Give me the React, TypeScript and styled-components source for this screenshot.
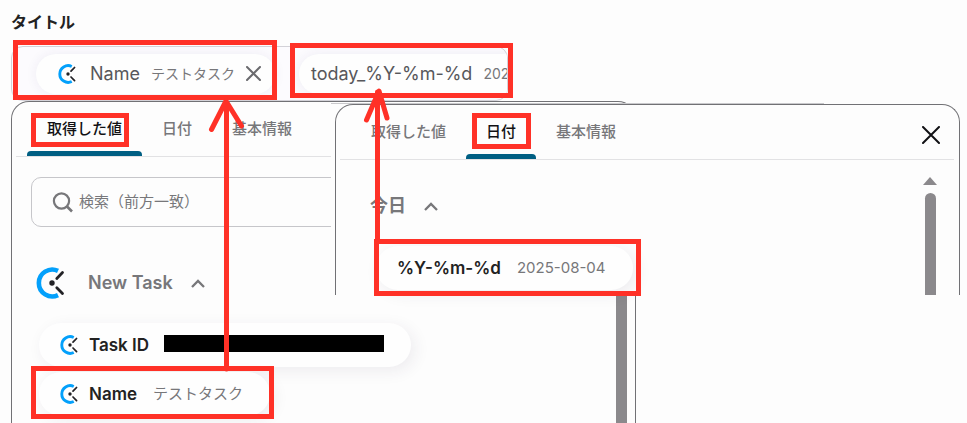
import React from "react";
import styled, { createGlobalStyle, css } from "styled-components";

const GlobalStyle = createGlobalStyle`
  *, *::before, *::after { box-sizing: border-box; }
  body {
    margin: 0;
    background: #fdfdfd;
    color: #222;
    font-family: Inter, "Noto Sans CJK JP", sans-serif;
  }
  button, input { font: inherit; color: inherit; border: 0; background: none; padding: 0; }
`;

const Page = styled.main`
  position: relative;
  display: flex;
  flex-direction: column;
  min-height: 100vh;
  padding: 10px 0 0 11px;
  overflow: hidden;
`;

const FieldLabel = styled.h1`
  margin: 0 0 12px;
  font-size: 16px;
  line-height: 24px;
  font-weight: 600;
`;

const Field = styled.div`
  display: flex;
  align-items: center;
  gap: 24px;
  width: 52%;
  max-width: 499px;
  height: 55px;
  padding-left: 24px;
  border: 1px solid #d3d2d8;
  border-radius: 12px;
  background: #fcfbfe;
  overflow: hidden;
`;

const Token = styled.div`
  display: flex;
  flex: none;
  align-items: center;
  height: 40px;
  padding: 0 11px 0 22px;
  border-radius: 20px;
  background: #fefefe;
  box-shadow: 0 0 12px rgba(60, 40, 110, 0.07);
  color: #57575b;
  white-space: nowrap;
`;

const TextToken = styled(Token)`
  padding-left: 12px;
`;

const TokenName = styled.span<{ $afterIcon?: boolean }>`
  margin: 0 11px 0 ${(p) => (p.$afterIcon ? "12px" : "0")};
  font-size: 18px;
  line-height: 24px;
`;

const TokenValue = styled.span`
  color: #77777a;
  font-size: 14px;
  line-height: 24px;
`;

const IconButton = styled.button`
  display: grid;
  place-items: center;
  cursor: pointer;
`;

const RemoveButton = styled(IconButton)`
  margin-left: 9px;
  width: 20px;
  height: 20px;
  color: #6a6a6e;
`;

const Panels = styled.div`
  display: grid;
  flex: 1;
  grid-template-columns: 320px 305px 1fr;
  grid-template-rows: 1fr;
`;

const panelFrame = css`
  border: 1px solid #717175;
  border-bottom: 0;
  border-radius: 18px 18px 0 0;
  background: #fdfdfd;
`;

const ValuesPanel = styled.section`
  ${panelFrame}
  grid-column: 1 / 3;
  grid-row: 1;
  min-width: 0;
`;

const DateLayer = styled.div`
  grid-column: 2 / 4;
  grid-row: 1;
  align-self: start;
  z-index: 1;
  margin-top: 2px;
  padding: 0 7px 0 4px;
  background: linear-gradient(#c9c9cc, #c9c9cc) 0 0 / 493px 1px no-repeat #fdfdfd;
`;

const DatePanel = styled.section`
  ${panelFrame}
  margin-top: 1px;
  height: 191px;
`;

const TabBar = styled.div`
  display: flex;
  align-items: stretch;
  height: 55px;
  margin: 0 5px 0 4px;
  padding-left: 11px;
  border-bottom: 1px solid #e2e2e4;
`;

const Tab = styled.button`
  display: flex;
  flex-direction: column;
  padding: 15px 0 0;
  color: #77777a;
  font-size: 15px;
  line-height: 24px;
  font-weight: 500;
  white-space: nowrap;
  cursor: pointer;

  span { padding: 0 20px; }

  &::after {
    content: "";
    width: 100%;
    height: 5px;
    margin-top: auto;
    border-radius: 4px 4px 0 0;
  }

  &[aria-selected="true"] { color: #111114; }
  &[aria-selected="true"]::after { background: #005f83; }
`;

const CloseButton = styled(IconButton)`
  align-self: center;
  width: 24px;
  height: 24px;
  margin: 5px 11px 0 auto;
  color: #111114;
`;

const PanelBody = styled.div`
  display: flex;
`;

const ValuesBody = styled(PanelBody)`
  height: calc(100% - 55px);
`;

const ValuesContent = styled.div`
  flex: 1;
  min-width: 0;
  padding: 20px 16px 4px 19px;
`;

const DateContent = styled.div`
  flex: 1;
  padding: 33px 0 0 34px;
`;

const SearchBox = styled.label`
  display: flex;
  align-items: center;
  gap: 6px;
  height: 50px;
  padding-left: 20px;
  border: 1px solid #c6c6ca;
  border-radius: 10px;
`;

const SearchInput = styled.input`
  flex: 1;
  min-width: 0;
  outline: 0;
  font-size: 15px;
  line-height: 24px;

  &::placeholder { color: #77777a; opacity: 1; }
`;

const GroupHeader = styled.button`
  display: flex;
  align-items: center;
  color: #77777a;
  font-size: 18px;
  line-height: 26px;
  font-weight: 600;
  cursor: pointer;

  svg:last-child { margin-left: 17px; }
`;

const TaskHeader = styled(GroupHeader)`
  height: 32px;
  margin: 40px 0 24px 5px;

  span { margin-left: 20px; }
`;

const OptionList = styled.div`
  display: flex;
  flex-direction: column;
  align-items: flex-start;
  gap: 5px;
  padding-left: 8px;
`;

const Option = styled.button`
  display: flex;
  align-items: center;
  height: 44px;
  padding: 0 27px 0 21px;
  border-radius: 22px;
  background: #fefefe;
  box-shadow: 4px 4px 16px rgba(50, 40, 80, 0.08);
  white-space: nowrap;
  cursor: pointer;
`;

const DateOption = styled(Option)`
  margin: 27px 0 0 6px;
`;

const OptionName = styled.span<{ $afterIcon?: boolean }>`
  margin-left: ${(p) => (p.$afterIcon ? "9px" : "0")};
  font-size: 17px;
  line-height: 24px;
  font-weight: 600;
`;

const OptionValue = styled.span`
  margin-left: 16px;
  color: #77777a;
  font-size: 15px;
  line-height: 24px;
`;

const Redacted = styled.span`
  width: 220px;
  height: 17px;
  margin: 0 0 3px 15px;
  background: #000;
`;

const ValuesThumb = styled.div`
  width: 11px;
  margin-right: 8px;
  background: #8b898c;
`;

const Scrollbar = styled.div`
  display: flex;
  flex-direction: column;
  align-items: center;
  gap: 8px;
  width: 14px;
  height: 135px;
  margin-right: 22px;
  padding-top: 17px;
`;

const DateThumb = styled.div`
  flex: 1;
  width: 11px;
  border-radius: 6px 6px 0 0;
  background: #8b898c;
`;

const Markup = styled.svg`
  position: absolute;
  top: 0;
  left: 0;
  z-index: 2;
  pointer-events: none;
`;

const ClockLogo = ({ size }: { size: number }) => (
  <svg width={size} height={size} viewBox="0 0 32 32" fill="none" aria-hidden="true">
    <path d="M22 3.9A13.4 13.4 0 1 0 22 28.1" stroke="#03a0fb" strokeWidth="4.6" />
    <circle cx="16" cy="16" r="2.7" fill="#222226" />
    <path d="M20.8 11.4l5.7-5.8M20.8 20.8l5.7 5.8" stroke="#222226" strokeWidth="2.8" strokeLinecap="round" />
  </svg>
);

const Cross = ({ size, width }: { size: number; width: number }) => (
  <svg width={size} height={size} viewBox={`0 0 ${size} ${size}`} fill="none" stroke="currentColor" strokeWidth={width} strokeLinecap="round" aria-hidden="true">
    <path d={`M1 1L${size - 1} ${size - 1}M${size - 1} 1L1 ${size - 1}`} />
  </svg>
);

const Chevron = () => (
  <svg width="16" height="10" viewBox="0 0 16 10" fill="none" stroke="currentColor" strokeWidth="2.3" aria-hidden="true">
    <path d="M2 9L8 3L14 9" />
  </svg>
);

const SearchIcon = () => (
  <svg width="21" height="21" viewBox="0 0 21 21" fill="none" stroke="#77777a" strokeWidth="2.2" aria-hidden="true">
    <circle cx="9.5" cy="9" r="7.6" />
    <path d="M15 14.5L20 19.5" strokeWidth="2.6" />
  </svg>
);

const TABS = ["取得した値", "日付", "基本情報"];

const Tabs = ({ selected, children }: { selected: string; children?: React.ReactNode }) => (
  <TabBar role="tablist">
    {TABS.map((name) => (
      <Tab key={name} type="button" role="tab" aria-selected={name === selected}>
        <span>{name}</span>
      </Tab>
    ))}
    {children}
  </TabBar>
);

const HIGHLIGHTS = [
  [13, 40, 264, 60],
  [290, 43, 223, 55],
  [31, 113, 98, 34],
  [472, 113, 59, 36],
  [31, 366, 243, 53],
  [374, 239, 267, 57],
];

const Annotations = () => (
  <Markup width="660" height="423" fill="none" stroke="#ff3127" strokeWidth="5" aria-hidden="true">
    {HIGHLIGHTS.map(([x, y, w, h]) => (
      <rect key={`${x}-${y}`} x={x + 2.5} y={y + 2.5} width={w - 5} height={h - 5} />
    ))}
    <g strokeLinecap="round" strokeLinejoin="round">
      <path d="M226.5 102V369M211.5 129.5L226 101L241.5 126" />
      <path d="M377.5 92V240M366.5 120L379 91L387 118" />
    </g>
  </Markup>
);

export default function App() {
  return (
    <>
      <GlobalStyle />
      <Page>
        <FieldLabel>タイトル</FieldLabel>
        <Field>
          <Token>
            <ClockLogo size={20} />
            <TokenName $afterIcon>Name</TokenName>
            <TokenValue>テストタスク</TokenValue>
            <RemoveButton type="button" aria-label="削除">
              <Cross size={15} width={2} />
            </RemoveButton>
          </Token>
          <TextToken>
            <TokenName>today_%Y-%m-%d</TokenName>
            <TokenValue>2025-08-04</TokenValue>
          </TextToken>
        </Field>
        <Panels>
          <ValuesPanel>
            <Tabs selected="取得した値" />
            <ValuesBody>
              <ValuesContent>
                <SearchBox>
                  <SearchIcon />
                  <SearchInput type="search" aria-label="検索" placeholder="検索（前方一致）" />
                </SearchBox>
                <TaskHeader type="button" aria-expanded="true">
                  <ClockLogo size={32} />
                  <span>New Task</span>
                  <Chevron />
                </TaskHeader>
                <OptionList>
                  <Option type="button">
                    <ClockLogo size={20} />
                    <OptionName $afterIcon>Task ID</OptionName>
                    <Redacted />
                  </Option>
                  <Option type="button">
                    <ClockLogo size={20} />
                    <OptionName $afterIcon>Name</OptionName>
                    <OptionValue>テストタスク</OptionValue>
                  </Option>
                </OptionList>
              </ValuesContent>
              <ValuesThumb />
            </ValuesBody>
          </ValuesPanel>
          <DateLayer>
            <DatePanel>
              <Tabs selected="日付">
                <CloseButton type="button" aria-label="閉じる">
                  <Cross size={18} width={2} />
                </CloseButton>
              </Tabs>
              <PanelBody>
                <DateContent>
                  <GroupHeader type="button" aria-expanded="true">
                    <span>今日</span>
                    <Chevron />
                  </GroupHeader>
                  <DateOption type="button">
                    <OptionName>%Y-%m-%d</OptionName>
                    <OptionValue>2025-08-04</OptionValue>
                  </DateOption>
                </DateContent>
                <Scrollbar>
                  <svg width="14" height="8" viewBox="0 0 14 8" aria-hidden="true">
                    <path d="M7 0L14 8H0z" fill="#8b898c" />
                  </svg>
                  <DateThumb />
                </Scrollbar>
              </PanelBody>
            </DatePanel>
          </DateLayer>
        </Panels>
        <Annotations />
      </Page>
    </>
  );
}
